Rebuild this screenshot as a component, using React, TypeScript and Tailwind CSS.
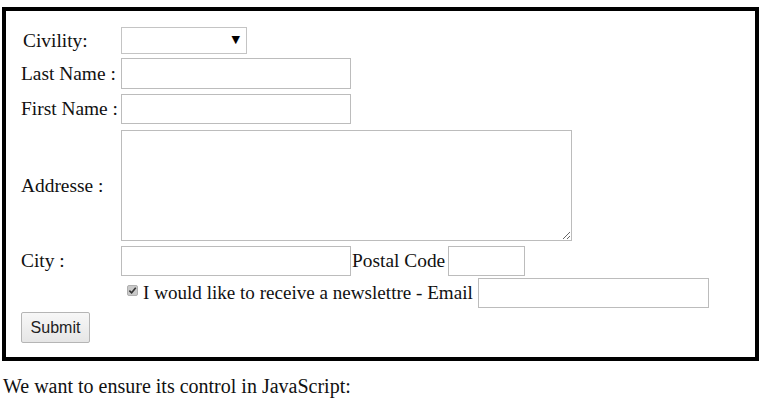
import React from "react";

const serif = { fontFamily: '"Liberation Serif", "Times New Roman", serif' };

function Label({ children, className = "" }: { children: React.ReactNode; className?: string }) {
  return <div className={"w-[100px] shrink-0 whitespace-nowrap text-[19.4px] text-[#111] " + className}>{children}</div>;
}

const inputCls =
  "block border border-[#bcbcbc] bg-white outline-none";

export default function App() {
  return (
    <div className="bg-white w-[775px] h-[402px] overflow-hidden pt-[7px]" style={serif}>
      <div className="ml-[2px] w-[757px] border-4 border-black pl-[15px] pt-[16px] pb-[14px]">
        <div className="flex items-center h-[27px]">
          <Label className="pl-[2px] text-[18.5px]">Civility:</Label>
          <div className="relative w-[126px] h-[27px] border border-[#c4c4c4] bg-white">
            <span className="absolute right-[6px] top-[6px] text-[11px] leading-none text-black" style={{ fontFamily: '"DejaVu Sans", sans-serif' }}>▼</span>
          </div>
        </div>
        <div className="flex items-center h-[31px] mt-[4px]">
          <Label>Last Name :</Label>
          <input className={inputCls + " w-[230px] h-[31px]"} />
        </div>
        <div className="flex items-center h-[30px] mt-[5px]">
          <Label>First Name :</Label>
          <input className={inputCls + " w-[230px] h-[30px]"} />
        </div>
        <div className="flex items-center h-[111px] mt-[6px]">
          <Label>Addresse :</Label>
          <textarea className={inputCls + " w-[451px] h-[111px] resize"} />
        </div>
        <div className="flex items-center h-[30px] mt-[5px]">
          <Label>City :</Label>
          <input className={inputCls + " w-[230px] h-[30px]"} />
          <span className="text-[19.4px] text-[#111] ml-[1px] whitespace-nowrap">Postal Code</span>
          <input className={inputCls + " w-[77px] h-[30px] ml-[3px]"} />
        </div>
        <div className="flex items-center h-[30px] mt-[2px]">
          <div className="w-[100px] shrink-0" />
          <span className="ml-[6px] mt-[-6px] w-[11px] h-[11px] rounded-[2px] bg-[#c9c9c9] border border-[#b0b0b0] flex items-center justify-center">
            <svg width="9" height="9" viewBox="0 0 10 10">
              <path d="M1.5 5.2 L4 7.6 L8.6 2" fill="none" stroke="#333" strokeWidth="1.8" />
            </svg>
          </span>
          <span className="ml-[5px] w-[331px] text-[19.1px] text-[#111] whitespace-nowrap">I would like to receive a newslettre - Email</span>
          <input className={inputCls + " w-[231px] h-[30px] ml-[4px]"} />
        </div>
        <div className="flex items-center h-[31px] mt-[4px]">
          <button
            className="w-[69px] h-[31px] rounded-[2px] border border-[#b5b5b5] bg-gradient-to-b from-[#f7f7f7] to-[#e6e6e6] text-[16px] text-[#222]"
            style={{ fontFamily: '"Liberation Sans", Arial, sans-serif' }}
          >
            Submit
          </button>
        </div>
      </div>
      <p className="mt-[14px] ml-[3px] text-[20px] leading-[22px] text-[#111]">We want to ensure its control in JavaScript:</p>
    </div>
  );
}
